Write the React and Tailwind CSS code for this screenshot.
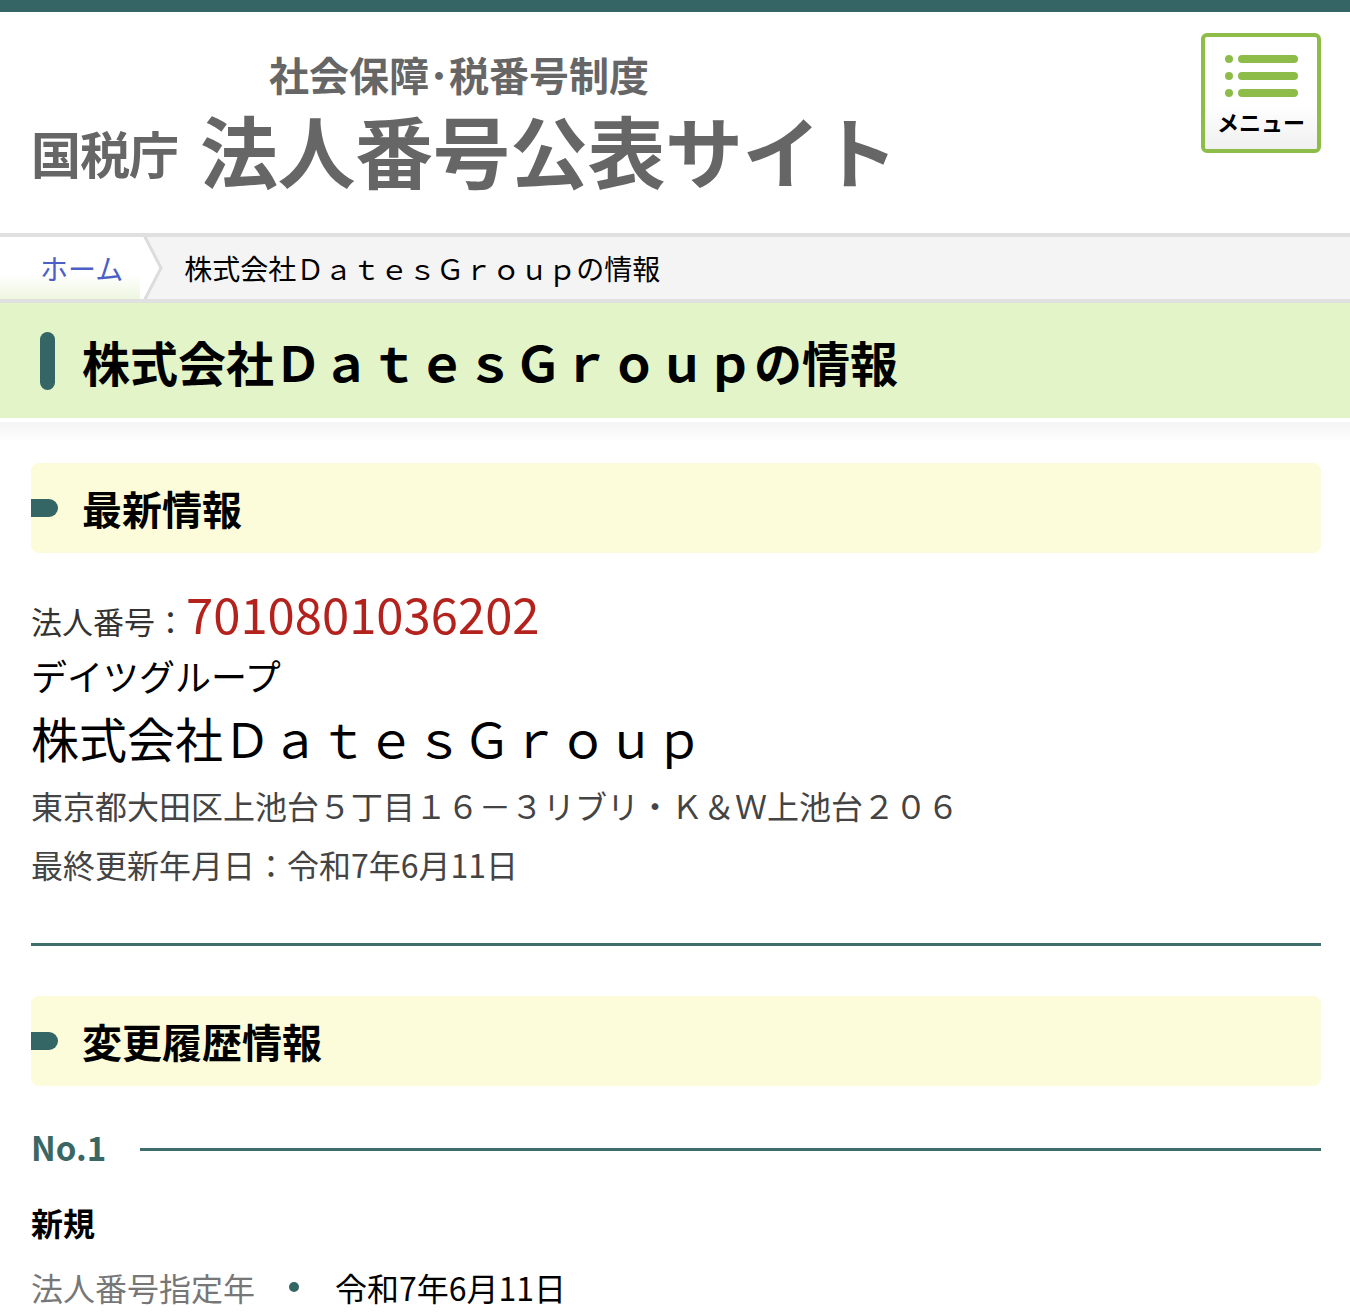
import React from "react";

const jp = { fontFamily: '"Noto Sans CJK JP", "Noto Sans", sans-serif' };

function SectionHeading({ children }) {
  return (
    <div className="flex h-[90px] items-center rounded-lg bg-[#fcfcda]">
      <span className="h-[18px] w-[27px] rounded-r-full bg-[#346666]" />
      <h2 className="ml-[24px] text-[40px] font-bold leading-none text-black">{children}</h2>
    </div>
  );
}

function MenuButton() {
  return (
    <button className="flex h-[120px] w-[120px] flex-col items-center overflow-hidden rounded-[6px] border-[4px] border-[#8dbd48] bg-white">
      <div className="mt-[18px] flex flex-col gap-[9px]">
        {[0, 1, 2].map((i) => (
          <div key={i} className="flex items-center gap-[5px]">
            <span className="h-[8px] w-[8px] rounded-full bg-[#8dbd48]" />
            <span className="h-[8px] w-[60px] rounded-full bg-[#8dbd48]" />
          </div>
        ))}
      </div>
      <div className="mt-[7px] w-full flex-1 bg-gradient-to-b from-white to-[#f0f0f0] pt-[2px] text-center text-[22px] font-bold leading-[30px] text-black">
        メニュー
      </div>
    </button>
  );
}

export default function App() {
  return (
    <div className="min-h-[1314px] w-[1350px] overflow-hidden bg-white text-[#333]" style={jp}>
      <div className="h-[12px] bg-[#356565]" />

      {/* header */}
      <header className="flex h-[221px] items-start justify-between pl-[31px] pr-[29px]">
        <div className="pt-[42px] text-[#666] font-bold">
          <div className="ml-[238px] text-[40px] leading-[40px]">社会保障･税番号制度</div>
          <div className="mt-[16px] flex items-end">
            <span className="mb-[3px] text-[50px] leading-[66px] tracking-[-1px]">国税庁</span>
            <span className="ml-[22px] text-[78px] leading-[78px] tracking-[-0.5px]">法人番号公表サイト</span>
          </div>
        </div>
        <div className="pt-[21px]">
          <MenuButton />
        </div>
      </header>

      {/* breadcrumb */}
      <nav className="flex h-[70px] items-stretch border-y-[4px] border-[#e0e0e0] bg-[#f4f4f4]">
        <a className="flex items-center bg-gradient-to-b from-white from-60% to-[#eef6e0] pl-[40px] pr-[18px] text-[28px] text-[#4c5fc4]">
          ホーム
        </a>
        <svg width="24" height="62" viewBox="0 0 24 62" className="-ml-px">
          <polygon points="0,0 0,62 6,62 22,31 6,0" fill="#fff" />
          <polyline points="4,-2 21,31 4,64" fill="none" stroke="#dcdcdc" strokeWidth="3" />
        </svg>
        <span className="ml-[20px] flex items-center text-[28px] text-black">株式会社ＤａｔｅｓＧｒｏｕｐの情報</span>
      </nav>

      {/* title */}
      <div className="flex h-[115px] items-center bg-[#e3f4c8] pl-[40px]">
        <span className="h-[58px] w-[15px] rounded-full bg-[#346666]" />
        <h1 className="ml-[27px] text-[48px] font-bold leading-none text-black">株式会社ＤａｔｅｓＧｒｏｕｐの情報</h1>
      </div>
      <div className="mt-[4px] h-[20px] bg-gradient-to-b from-[#f4f4f4] to-white" />

      <main className="pl-[31px] pr-[29px] pt-[21px]">
        <SectionHeading>最新情報</SectionHeading>

        <div className="mt-[30px] flex items-baseline">
          <span className="text-[31px] text-[#333]">法人番号：</span>
          <span className="text-[49px] leading-[60px] text-[#b3221c]">7010801036202</span>
        </div>
        <div className="mt-[6px] text-[36px] leading-[48px] text-black">デイツグループ</div>
        <div className="mt-[6px] text-[48px] leading-[64px] text-black">株式会社ＤａｔｅｓＧｒｏｕｐ</div>
        <div className="mt-[14px] text-[32px] leading-[44px] text-[#444]">東京都大田区上池台５丁目１６－３リブリ・Ｋ＆Ｗ上池台２０６</div>
        <div className="mt-[15px] text-[32px] leading-[44px] text-[#444]">最終更新年月日：令和7年6月11日</div>

        <hr className="mt-[57px] border-t-[3px] border-[#3f6d6b]" />

        <div className="mt-[50px]">
          <SectionHeading>変更履歴情報</SectionHeading>
        </div>

        <div className="mt-[39px] flex items-center">
          <span className="text-[33px] font-bold leading-[44px] text-[#3a6664]">No.1</span>
          <span className="ml-[34px] mt-[6px] h-[3px] flex-1 bg-[#3f6d6b]" />
        </div>

        <div className="mt-[31px] text-[32px] font-bold leading-[44px] text-black">新規</div>

        <div className="mt-[21px] flex items-center text-[32px] leading-[44px]">
          <span className="text-[#777]">法人番号指定年</span>
          <span className="ml-[34px] h-[10px] w-[10px] rounded-full bg-[#346666]" />
          <span className="ml-[36px] text-black">令和7年6月11日</span>
        </div>
      </main>
    </div>
  );
}
